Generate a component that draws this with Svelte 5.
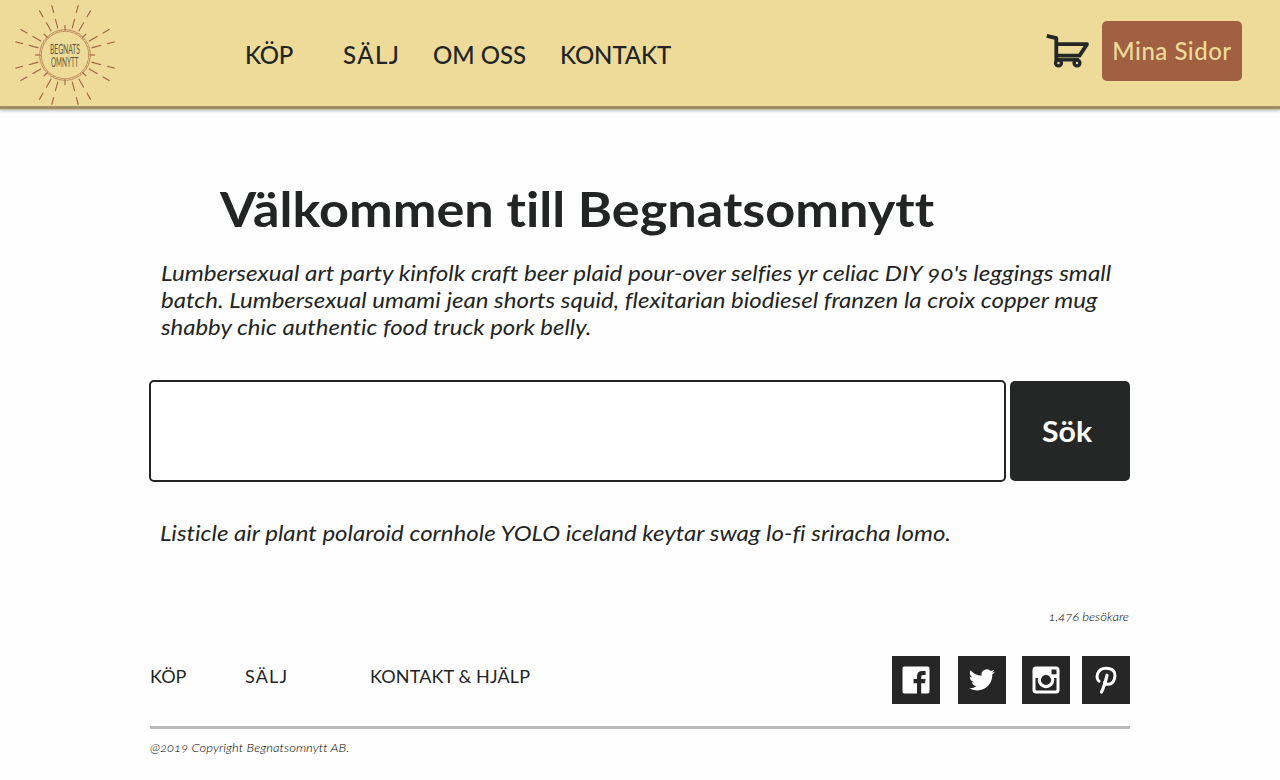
<script>
  const rays = [];
  for (let a = 0; a < 360; a += 15) {
    if (a % 45 === 0) rays.push({ a, from: 24.5, to: 30 });
    else rays.push({ a, from: 27.5, to: 37.5 }, { a, from: 43.5, to: 51.5 });
  }
  const beads = Array.from({ length: 36 }, (_, i) => i * 10);
</script>

<header>
  <svg class="logo" viewBox="-50 -50 100 100" width="100" height="100">
    <g stroke="#a15f42" stroke-width="1.1">
      {#each rays as r}
        <line x1={r.from} x2={r.to} y1="0" y2="0" transform="rotate({r.a})" />
      {/each}
    </g>
    <g fill="none" stroke="#b98258">
      <circle r="25.4" stroke-width=".7" />
      <circle r="23.7" stroke-width=".7" />
      {#each beads as b}
        <path d="M23.5 -2 L25.6 2" stroke-width=".6" transform="rotate({b})" />
      {/each}
    </g>
    <g fill="#5b563b" font-size="13.5">
      <text x="-15" y="-1.5" textLength="30" lengthAdjust="spacingAndGlyphs">BEGNATS</text>
      <text x="-14" y="12" textLength="27.5" lengthAdjust="spacingAndGlyphs">OMNYTT</text>
    </g>
  </svg>
  <nav>
    <a class="n1" href="#kop">KÖP</a>
    <a class="n2" href="#salj">SÄLJ</a>
    <a class="n3" href="#om">OM OSS</a>
    <a class="n4" href="#kontakt">KONTAKT</a>
  </nav>
  <svg class="cart" width="46" height="36" viewBox="0 0 46 36" fill="none" stroke="#232826" stroke-width="3.8" stroke-linejoin="round">
    <path d="M1.8 2.8 L11.3 5.2 V22.6 H34.5 L42 11.2 H11.3 M11.3 22 V28" />
    <path d="M11 26.8 H34" stroke-width="3.4" />
    <circle cx="13.5" cy="30" r="2.9" stroke-width="3.4" />
    <circle cx="32" cy="30" r="2.9" stroke-width="3.4" />
  </svg>
  <button class="mine">Mina Sidor</button>
</header>

<main>
  <h1>Välkommen till Begnatsomnytt</h1>
  <p class="intro">
    <span class="l1">Lumbersexual art party kinfolk craft beer plaid pour-over selfies yr celiac DIY 90's leggings small</span>
    <span class="l2">batch. Lumbersexual umami jean shorts squid, flexitarian biodiesel franzen la croix copper mug</span>
    <span class="l3">shabby chic authentic food truck pork belly.</span>
  </p>
  <form>
    <input type="text" aria-label="Sök" />
    <button type="button"><span>Sök</span></button>
  </form>
  <p class="tagline"><span>Listicle air plant polaroid cornhole YOLO iceland keytar swag lo-fi sriracha lomo.</span></p>
  <p class="visits">1,476 besökare</p>
</main>

<footer>
  <div class="row">
    <div class="links">
      <a class="f1" href="#kop">KÖP</a>
      <a class="f2" href="#salj">SÄLJ</a>
      <a class="f3" href="#hjalp">KONTAKT &amp; HJÄLP</a>
    </div>
    <div class="social">
      <svg viewBox="0 0 48 48"><path fill="#fff" d="M12.3 10.5 H35.6 Q37.5 10.5 37.5 12.4 V35.6 Q37.5 37.5 35.6 37.5 H29.2 V27.2 H33 L33.6 23 H29.2 V20.8 Q29.2 18.9 31.2 18.9 H33.6 V15 H30.4 Q25 15 25 20.2 V23 H21.5 V27.2 H25 V37.5 H12.3 Q10.5 37.5 10.5 35.6 V12.4 Q10.5 10.5 12.3 10.5Z" /></svg>
      <svg viewBox="0 0 48 48"><path fill="#fff" transform="translate(10.8 10.8) scale(1.09)" d="M23.95 4.57a10 10 0 0 1-2.82.77 4.96 4.96 0 0 0 2.16-2.72c-.95.55-2 .95-3.13 1.19a4.92 4.92 0 0 0-8.38 4.48C7.69 8.09 4.07 6.13 1.64 3.16a4.82 4.82 0 0 0-.67 2.48c0 1.71.87 3.21 2.19 4.1a4.9 4.9 0 0 1-2.23-.62v.06a4.92 4.92 0 0 0 3.95 4.83 5 5 0 0 1-2.21.08 4.94 4.94 0 0 0 4.6 3.42A9.87 9.87 0 0 1 0 19.54a13.99 13.99 0 0 0 7.56 2.21c9.05 0 14-7.5 14-13.98 0-.21 0-.42-.02-.63a9.94 9.94 0 0 0 2.41-2.57z" /></svg>
      <svg viewBox="0 0 48 48">
        <rect x="10.5" y="10.5" width="27" height="27" rx="3.5" fill="#fff" />
        <path fill="#262626" d="M13.5 22 H34.5 V33.5 Q34.5 34.5 33.5 34.5 H14.5 Q13.5 34.5 13.5 33.5Z" />
        <circle cx="24" cy="24" r="6.7" fill="#262626" stroke="#fff" stroke-width="3.2" />
        <rect x="29.5" y="13.5" width="5" height="4.8" fill="#262626" />
      </svg>
      <svg viewBox="0 0 48 48"><path fill="none" stroke="#fff" stroke-width="3" stroke-linecap="round" stroke-linejoin="round" d="M17 25.2 C13.5 22 14.8 12.2 24 12.2 C31 12.2 33.4 16 33 20 C32.4 25.5 29.5 28.3 26.3 28.3 C24.5 28.3 23 27.5 22.5 26.3" /><path d="M25 19.2 C23.5 26 21.5 32 19.5 36" fill="none" stroke="#fff" stroke-width="3.2" stroke-linecap="round" /></svg>
    </div>
  </div>
  <p>@2019 Copyright Begnatsomnytt AB.</p>
</footer>

<style>
  :global(body) { background: #fefefe; }
  :global(#app) { font-family: Lato, "Open Sans", sans-serif; color: #222524; height: 780px; overflow: hidden; font-variant-ligatures: none; }
  a { color: inherit; text-decoration: none; }
  p, h1 { margin: 0; white-space: nowrap; }
  span { display: block; width: max-content; transform-origin: 0 50%; }
  header {
    height: 106px; display: flex; align-items: flex-start; box-sizing: border-box;
    background: #eedb9a; box-shadow: 0 3px 0 #9c9064, 0 4px 0 #c9c1a4, 0 4px 4px #0006; margin-bottom: 74px;
  }
  .logo { margin: 5px 0 0 15px; flex: none; overflow: visible; }
  nav { display: flex; flex: none; margin: 40px 0 0 130px; width: 800px; font-size: 24px; line-height: 30px; font-weight: 500; white-space: nowrap; }
  .n1 { width: 98px; letter-spacing: -.3px; }
  .n2 { width: 90px; letter-spacing: 1.4px; }
  .n3 { width: 127px; }
  .n4 { letter-spacing: -.1px; }
  .cart { margin-top: 33px; flex: none; }
  button { border: 0; font-family: inherit; border-radius: 5px; padding: 0; }
  .mine {
    width: 140px; height: 60px; margin: 21px 0 0 11px; flex: none; padding-bottom: 2px;
    background: #a06041; color: #eedb9a; font-size: 24px; font-weight: 500; letter-spacing: .5px;
  }
  main { width: 980px; margin: 0 auto; }
  h1 { width: max-content; margin-left: 70px; font-size: 48px; line-height: 58px; font-weight: 700; transform: scaleX(1.088); transform-origin: 0 50%; }
  .intro { padding: 21px 0 0 11px; font-size: 22px; line-height: 27px; font-style: italic; font-variant-numeric: oldstyle-nums; }
  .l1 { transform: scaleX(1.1); }
  .l2 { transform: scaleX(1.093); }
  .l3 { transform: scaleX(1.087); }
  form { display: flex; gap: 4px; margin: 40px 0 0 -1px; height: 102px; align-items: center; }
  input { width: 857px; height: 102px; box-sizing: border-box; border: 2px solid #222524; border-radius: 5px; background: #fff; padding: 0 16px; font: 22px Lato, sans-serif; }
  form button { width: 120px; height: 100px; background: #252726; color: #fff; font-size: 28px; font-weight: 700; padding: 0 6px 0 32px; }
  form span { transform: scaleX(1.08); }
  .tagline { padding: 37px 0 0 10px; font-size: 22px; line-height: 27px; font-style: italic; }
  .tagline span { transform: scaleX(1.093); }
  .visits { margin: 63px 1px 0 0; font-size: 12px; line-height: 16px; font-style: italic; font-weight: 300; color: #000; font-variant-numeric: oldstyle-nums; text-align: right; transform: scaleX(1.09); transform-origin: 100% 50%; }
  footer { width: 980px; margin: 31px auto 0; }
  .row { height: 70px; display: flex; justify-content: space-between; border-bottom: 3px solid #bbb; }
  .links { display: flex; padding-top: 8px; font-size: 18px; line-height: 24px; white-space: nowrap; }
  .f1 { width: 95px; }
  .f2 { width: 125px; letter-spacing: 1.2px; }
  .f3 { letter-spacing: .12px; }
  .social { display: flex; }
  .social svg { width: 48px; height: 48px; background: #262626; margin-left: 18px; }
  .social svg:nth-child(3) { margin-left: 16px; }
  .social svg:nth-child(4) { margin-left: 12px; }
  footer p { margin-top: 11px; width: max-content; font-size: 12px; line-height: 16px; font-style: italic; font-weight: 300; color: #000; font-variant-numeric: oldstyle-nums; transform: scaleX(1.09); transform-origin: 0 50%; }
</style>
